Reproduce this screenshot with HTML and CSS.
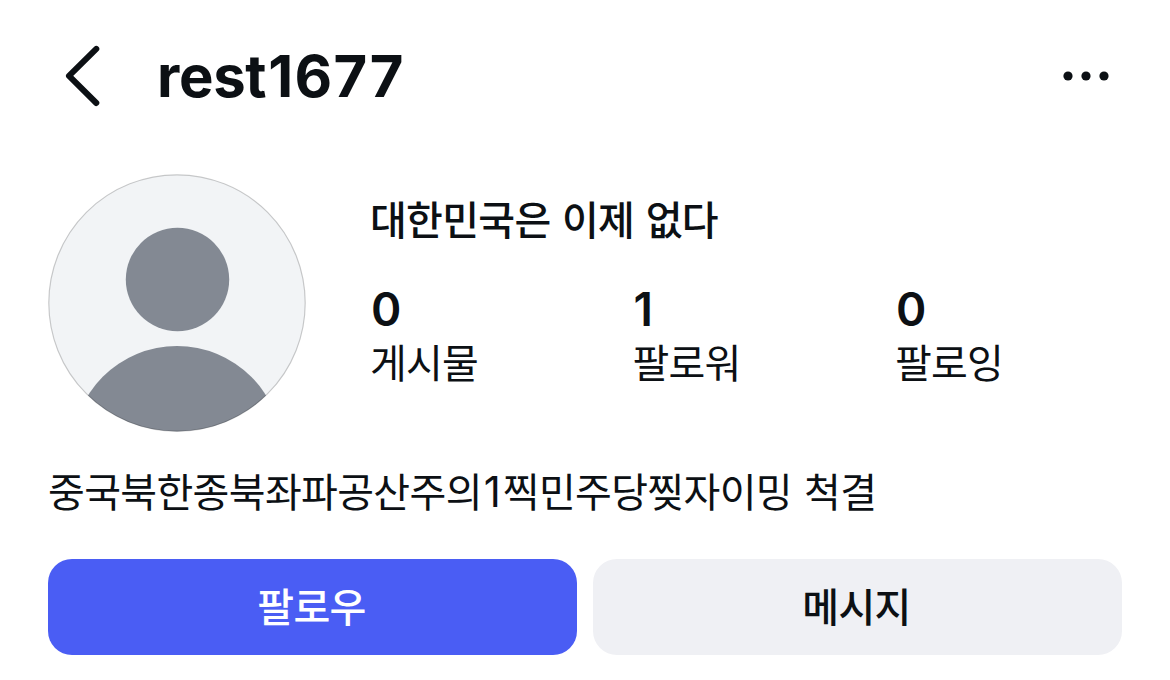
FILE: index.html
```html
<!DOCTYPE html>
<html lang="ko">
<head>
<meta charset="utf-8">
<title>rest1677</title>
<link rel="stylesheet" href="styles.css">
</head>
<body>
<main class="profile">
  <header class="topbar">
    <svg class="back" width="44" height="68" viewBox="0 0 44 68"><path d="M36.300 6.900 9 33.800 36.300 61"/></svg>
    <h1 class="username">rest<span class="username-digits">1677</span></h1>
    <svg class="more" width="50" height="16" viewBox="0 0 50 16"><circle cx="8" cy="8" r="4.600"/><circle cx="26" cy="8" r="4.600"/><circle cx="44" cy="8" r="4.600"/></svg>
  </header>
  <section class="summary">
    <svg class="avatar" width="258" height="258" viewBox="0 0 258 258">
      <defs><clipPath id="disc"><circle cx="129" cy="129" r="128.500"/></clipPath></defs>
      <circle cx="129" cy="129" r="128.500" fill="#f2f4f6"/>
      <g clip-path="url(#disc)" fill="#838993"><circle cx="129.500" cy="105.500" r="51.700"/><circle cx="129" cy="277" r="105"/></g>
      <circle cx="129" cy="129" r="128.200" fill="none" stroke="#000" stroke-opacity=".19" stroke-width="1.200"/>
    </svg>
    <div class="details">
      <h2 class="name">대한민국은 이제 없다</h2>
      <div class="stats">
        <div class="stat"><b class="count">0</b><span class="label">게시물</span></div>
        <div class="stat"><b class="count">1</b><span class="label">팔로워</span></div>
        <div class="stat"><b class="count">0</b><span class="label">팔로잉</span></div>
      </div>
    </div>
  </section>
  <p class="bio">중국북한종북좌파공산주의<span class="digit">1</span>찍민주당찢자이밍 척결</p>
  <div class="actions">
    <button class="button primary">팔로우</button>
    <button class="button secondary">메시지</button>
  </div>
</main>
</body>
</html>
```
FILE: styles.css
```css
* { box-sizing: border-box; }
body {
  margin: 0;
  background: #fff;
  color: #0c1014;
  font-family: Inter, "Noto Sans CJK KR", sans-serif;
}
h1, h2, p { margin: 0; }
svg { display: block; flex: none; }
.profile { width: 1170px; height: 680px; padding: 42px 48px 0; overflow: hidden; }
.topbar { display: flex; align-items: center; height: 68px; padding: 0 12px; }
.back { fill: none; stroke: #0c1014; stroke-width: 6; stroke-linecap: round; stroke-linejoin: round; }
.username { flex: 1; margin-left: 53px; font-size: 58px; line-height: 68px; font-weight: 700; letter-spacing: -0.3px; }
.username-digits { margin-left: 2px; letter-spacing: 1.3px; }
.more { fill: #0c1014; }
.summary { display: flex; gap: 64px; margin-top: 64px; }
.details { flex: 1; padding-top: 19px; }
.name { font-size: 40px; line-height: 56px; font-weight: 500; letter-spacing: -0.7px; word-spacing: 1.5px; white-space: nowrap; }
.stats { display: grid; grid-template-columns: repeat(3, 262.500px); margin-top: 33px; }
.stat { display: flex; flex-direction: column; }
.count { padding-left: 1px; font-size: 46px; line-height: 54px; font-weight: 600; }
.label { margin-top: 2px; font-size: 40px; line-height: 52px; letter-spacing: -0.8px; }
.bio { margin-top: 33px; font-size: 40px; line-height: 56px; letter-spacing: -0.65px; word-spacing: 1.500px; white-space: nowrap; }
.digit { margin: 0 2.500px 0 2px; font-size: 42px; line-height: 1; }
.actions { display: grid; grid-template-columns: 1fr 1fr; gap: 16px; margin-top: 38px; }
.button { height: 96px; padding: 0 2px 5px 0; border: 0; border-radius: 24px; font: inherit; font-size: 40px; font-weight: 500; letter-spacing: -0.7px; }
.primary { background: #4a5df4; color: #fff; }
.secondary { background: #eff0f4; color: #0c1014; }
```
